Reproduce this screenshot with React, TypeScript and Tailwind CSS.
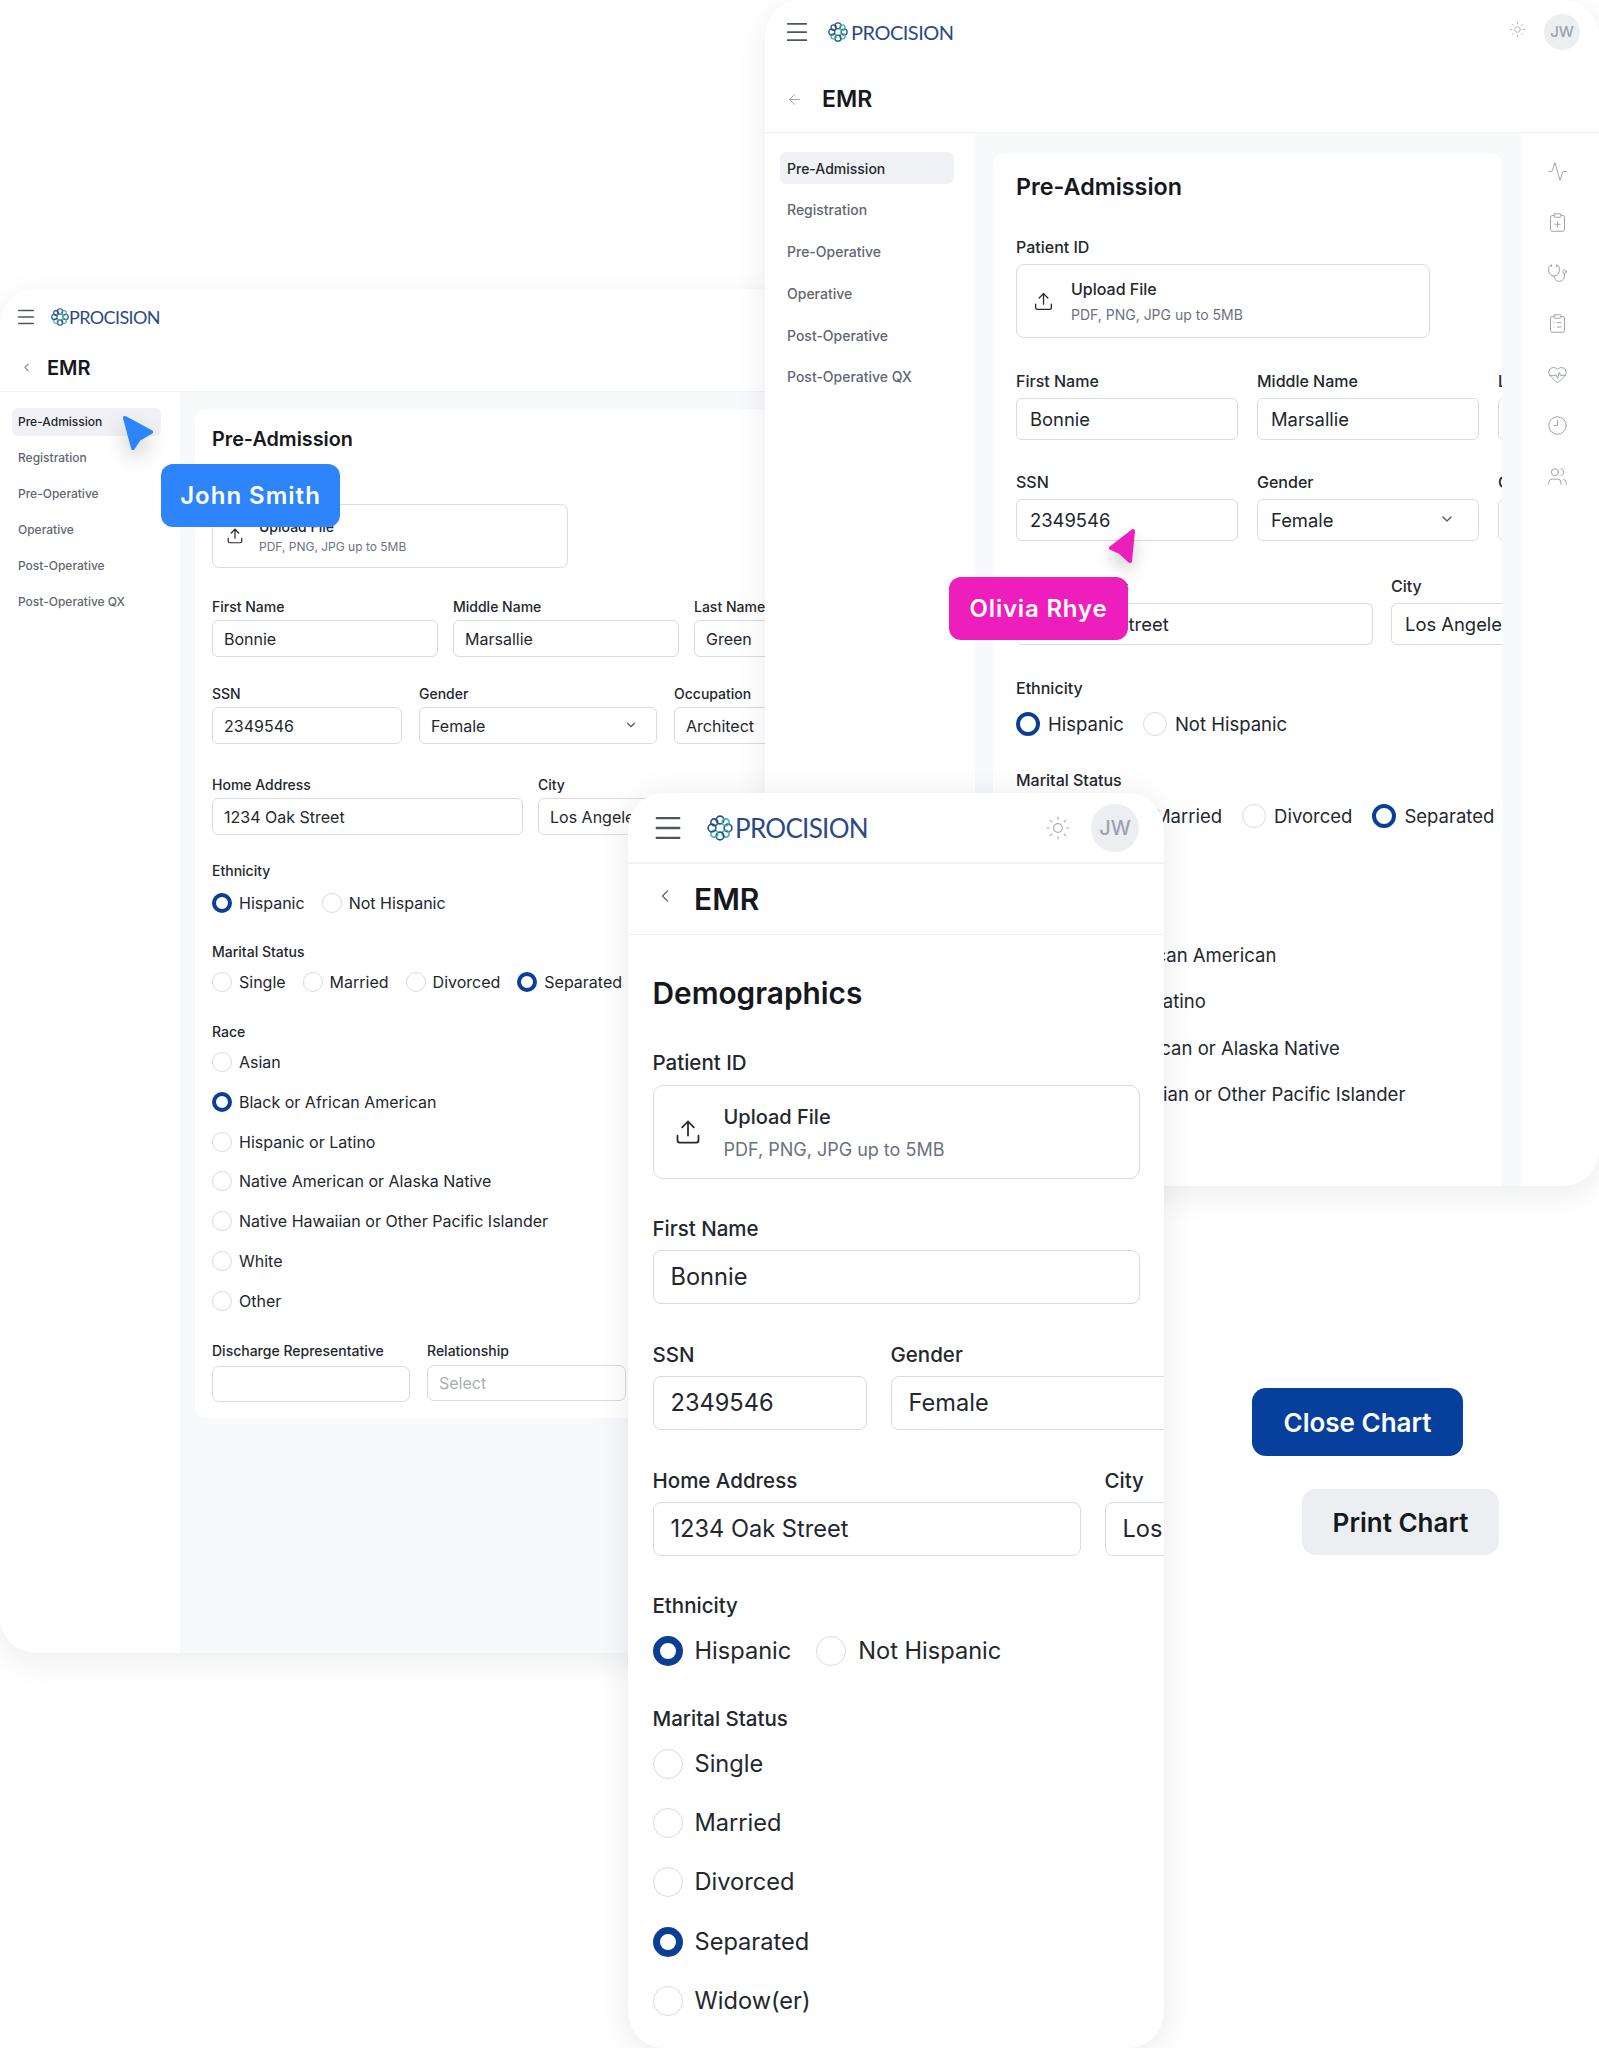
import React from "react";
import { Menu, Sun, ArrowLeft, ChevronLeft, ChevronDown, Upload, Activity, ClipboardPlus, Stethoscope, ClipboardList, HeartPulse, Clock9, Users } from "lucide-react";

const LOBES = [0, 45, 90, 135, 180, 225, 270, 315];

function Logo({ size, textClass, gapClass }: { size: number; textClass: string; gapClass: string }) {
  return (
    <div className={`flex items-center ${gapClass}`}>
      <svg width={size} height={size} viewBox="0 0 24 24" fill="none" strokeWidth="1.5">
        {LOBES.map((a, i) => (
          <circle
            key={a}
            cx={12 + 7.4 * Math.cos((a * Math.PI) / 180)}
            cy={12 + 7.4 * Math.sin((a * Math.PI) / 180)}
            r={i % 2 === 0 ? 3.6 : 3.2}
            stroke={a >= 180 && a < 315 ? "#2b4f8a" : i % 2 === 0 ? "#2b4f8a" : "#3bb3a6"}
          />
        ))}
      </svg>
      <span className={`font-[Lato,sans-serif] text-[#2b4a86] ${textClass}`}>PROCISION</span>
    </div>
  );
}

function Radio({ label, on, size, ring, text, gap }: { label: string; on?: boolean; size: string; ring: string; text: string; gap: string }) {
  return (
    <div className={`flex items-center whitespace-nowrap ${gap}`}>
      <span className={`shrink-0 rounded-full bg-white ${size} ${on ? `${ring} border-[#0b3f95]` : "border border-[#d9dbdf]"}`} />
      <span className={`text-[#23272e] ${text}`}>{label}</span>
    </div>
  );
}

const ETH = [["Hispanic", true], ["Not Hispanic", false]] as const;
const MAR = [["Single", false], ["Married", false], ["Divorced", false], ["Separated", true]] as const;
const RACE = ["Asian", "Black or African American", "Hispanic or Latino", "Native American or Alaska Native", "Native Hawaiian or Other Pacific Islander", "White", "Other"];
const NAV = ["Pre-Admission", "Registration", "Pre-Operative", "Operative", "Post-Operative", "Post-Operative QX"];

function InputA({ w, v, label, chevron }: { w: string; v: string; label: string; chevron?: boolean }) {
  return (
    <div className={`shrink-0 ${w}`}>
      <div className="h-[18px] text-[14px] leading-[18px] font-medium text-[#23272e]">{label}</div>
      <div className="mt-[4px] flex h-[37px] items-center justify-between rounded-[6px] border border-[#d8dbe0] bg-white pr-[18px] pl-[11px] text-[16px] text-[#23272e]">
        <span className="whitespace-nowrap">{v}</span>
        {chevron && <ChevronDown size={14} className="mt-[-2px] text-[#555b65]" />}
      </div>
    </div>
  );
}

function InputB({ w, v, label, chevron }: { w: string; v: string; label: string; chevron?: boolean }) {
  return (
    <div className={`shrink-0 ${w}`}>
      <div className="h-[20px] text-[16px] leading-[20px] font-medium text-[#23272e]">{label}</div>
      <div className="mt-[7px] flex h-[42px] items-center justify-between rounded-[6px] border border-[#d8dbe0] bg-white pt-[2px] pr-[23px] pl-[13px] text-[18.4px] text-[#23272e]">
        <span className="whitespace-nowrap">{v}</span>
        {chevron && <ChevronDown size={16} className="mt-[-4px] text-[#555b65]" />}
      </div>
    </div>
  );
}

function InputC({ w, v, label }: { w: string; v: string; label: string }) {
  return (
    <div className={`shrink-0 ${w}`}>
      <div className="h-[26px] text-[20.5px] leading-[26px] font-medium text-[#23272e]">{label}</div>
      <div className="mt-[8px] flex h-[54px] items-center rounded-[8px] border border-[#d8dbe0] bg-white pl-[17px] text-[23.6px] text-[#23272e]">
        <span className="whitespace-nowrap">{v}</span>
      </div>
    </div>
  );
}

function WindowA() {
  const r = { size: "h-[20px] w-[20px]", ring: "border-[4px]", text: "text-[16px] leading-[20px]", gap: "gap-[7px]" };
  return (
    <section className="absolute top-[289px] left-0 flex h-[1364px] w-[800px] flex-col overflow-hidden rounded-[36px] bg-white shadow-[0_8px_32px_rgba(16,24,40,0.08)]">
      <div className="flex h-[56px] shrink-0 items-center pl-[15px]">
        <Menu size={22} strokeWidth={1.6} className="text-[#4b5563]" />
        <div className="ml-[14px]"><Logo size={18} gapClass="gap-0" textClass="text-[18px] leading-none tracking-[-0.6px]" /></div>
      </div>
      <div className="flex h-[47px] shrink-0 items-center border-b border-[#f1f2f4] pl-[20px]">
        <ChevronLeft size={13} className="mt-[-2px] text-[#8b9098]" />
        <span className="ml-[14px] text-[20px] font-semibold text-[#15181d]">EMR</span>
      </div>
      <div className="flex min-h-0 flex-1">
        <nav className="flex w-[180px] shrink-0 flex-col gap-[8px] pt-[16px] pr-[19px] pl-[12px]">
          {NAV.map((n, i) => (
            <div key={n} className={`flex h-[28px] items-center rounded-[6px] px-[6px] text-[12px] font-medium whitespace-nowrap ${i === 0 ? "bg-[#f0f1f4] text-[#23272e]" : "text-[#5f6772]"}`}>{n}</div>
          ))}
        </nav>
        <main className="flex-1 overflow-hidden bg-[#f8f9fb] pt-[17px] pl-[15px]">
          <div className="h-[1009px] w-[700px] overflow-hidden rounded-[10px] bg-white pt-[17px] pl-[17px]">
            <h2 className="h-[26px] text-[19.8px] leading-[26px] font-semibold text-[#15181d]">Pre-Admission</h2>
            <div className="mt-[26px] h-[18px] text-[14px] leading-[18px] font-medium text-[#23272e]">Patient ID</div>
            <div className="mt-[8px] flex h-[64px] w-[356px] items-center gap-[15px] rounded-[7px] border border-[#d8dbe0] pl-[13px]">
              <Upload size={18} strokeWidth={1.6} className="text-[#23272e]" />
              <div>
                <div className="text-[14px] leading-[19px] font-medium text-[#23272e]">Upload File</div>
                <div className="mt-[3px] text-[12px] leading-[16px] text-[#6b7280]">PDF, PNG, JPG up to 5MB</div>
              </div>
            </div>
            <div className="mt-[30px] flex gap-[15px]">
              <InputA w="w-[226px]" label="First Name" v="Bonnie" />
              <InputA w="w-[226px]" label="Middle Name" v="Marsallie" />
              <InputA w="w-[226px]" label="Last Name" v="Green" />
            </div>
            <div className="mt-[28px] flex gap-[17px]">
              <InputA w="w-[190px]" label="SSN" v="2349546" />
              <InputA w="w-[238px]" label="Gender" v="Female" chevron />
              <InputA w="w-[226px]" label="Occupation" v="Architect" />
            </div>
            <div className="mt-[32px] flex gap-[15px]">
              <InputA w="w-[311px]" label="Home Address" v="1234 Oak Street" />
              <InputA w="w-[226px]" label="City" v="Los Angeles" />
            </div>
            <div className="mt-[27px] h-[18px] text-[14px] leading-[18px] font-medium text-[#23272e]">Ethnicity</div>
            <div className="mt-[13px] flex gap-[17px]">
              {ETH.map(([l, o]) => <Radio key={l} label={l} on={o} {...r} />)}
            </div>
            <div className="mt-[30px] h-[18px] text-[14px] leading-[18px] font-medium text-[#23272e]">Marital Status</div>
            <div className="mt-[11px] flex gap-[17px]">
              {MAR.map(([l, o]) => <Radio key={l} label={l} on={o} {...r} />)}
            </div>
            <div className="mt-[31px] h-[18px] text-[14px] leading-[18px] font-medium text-[#23272e]">Race</div>
            <div className="mt-[11px] flex flex-col gap-[19.8px]">
              {RACE.map((l, i) => <Radio key={l} label={l} on={i === 1} {...r} />)}
            </div>
            <div className="mt-[31px] flex gap-[17px]">
              <div className="w-[198px] shrink-0">
                <div className="h-[18px] text-[14px] leading-[18px] font-medium text-[#23272e]">Discharge Representative</div>
                <div className="mt-[6px] h-[36px] rounded-[7px] border border-[#d8dbe0]" />
              </div>
              <div className="w-[199px] shrink-0">
                <div className="h-[18px] text-[14px] leading-[18px] font-medium text-[#23272e]">Relationship</div>
                <div className="mt-[5px] flex h-[36px] items-center rounded-[7px] border border-[#d8dbe0] pl-[11px] text-[16px] text-[#a9aeb6]">Select</div>
              </div>
            </div>
          </div>
        </main>
      </div>
    </section>
  );
}

function WindowB() {
  const r = { size: "h-[24px] w-[24px]", ring: "border-[4.5px]", text: "text-[18.5px] leading-[24px]", gap: "gap-[8px]" };
  const label = "h-[20px] text-[16px] leading-[20px] font-medium text-[#23272e]";
  const rail = [Activity, ClipboardPlus, Stethoscope, ClipboardList, HeartPulse, Clock9, Users];
  return (
    <section className="absolute top-0 left-[765px] flex h-[1186px] w-[834px] flex-col overflow-hidden rounded-[36px] bg-white shadow-[0_8px_32px_rgba(16,24,40,0.08)]">
      <div className="flex h-[65px] shrink-0 items-center pr-[19px] pb-[1px] pl-[18px]">
        <Menu size={28} strokeWidth={1.5} className="text-[#4b5563]" />
        <div className="ml-[17px]"><Logo size={20} gapClass="gap-[3px]" textClass="text-[20px] leading-none tracking-[-0.5px]" /></div>
        <Sun size={17} strokeWidth={1.2} className="mt-[-6px] ml-auto text-[#a6abb3]" />
        <div className="ml-[18px] flex h-[36px] w-[36px] items-center justify-center rounded-full bg-[#eceef2] text-[15px] font-medium text-[#9ca3af]">JW</div>
      </div>
      <div className="flex h-[68px] shrink-0 items-center border-b border-[#eef0f2] pt-[2px] pl-[21px]">
        <ArrowLeft size={17} strokeWidth={1.3} className="text-[#9aa0a8]" />
        <span className="ml-[19px] text-[23px] font-semibold text-[#15181d]">EMR</span>
      </div>
      <div className="flex min-h-0 flex-1">
        <nav className="flex w-[210px] shrink-0 flex-col gap-[9.8px] pt-[19px] pr-[21px] pl-[15px]">
          {NAV.map((n, i) => (
            <div key={n} className={`flex h-[32px] items-center rounded-[6px] px-[7px] text-[14px] font-medium whitespace-nowrap ${i === 0 ? "bg-[#f0f1f4] text-[#23272e]" : "text-[#5f6772]"}`}>{n}</div>
          ))}
        </nav>
        <main className="w-[546px] shrink-0 overflow-hidden bg-[#f8f9fb] pt-[20px] pl-[18px]">
          <div className="h-[1040px] w-[509px] overflow-hidden rounded-t-[12px] bg-white pt-[20px] pl-[23px]">
            <h2 className="h-[28px] text-[23.3px] leading-[28px] font-semibold text-[#15181d]">Pre-Admission</h2>
            <div className={`mt-[36px] ${label}`}>Patient ID</div>
            <div className="mt-[7px] flex h-[74px] w-[414px] items-center gap-[17px] rounded-[8px] border border-[#d8dbe0] pl-[16px]">
              <Upload size={21} strokeWidth={1.5} className="text-[#23272e]" />
              <div>
                <div className="text-[16px] leading-[22px] font-medium text-[#23272e]">Upload File</div>
                <div className="mt-[6px] text-[14px] leading-[18px] text-[#6b7280]">PDF, PNG, JPG up to 5MB</div>
              </div>
            </div>
            <div className="mt-[33px] flex gap-[19px]">
              <InputB w="w-[222px]" label="First Name" v="Bonnie" />
              <InputB w="w-[222px]" label="Middle Name" v="Marsallie" />
              <InputB w="w-[222px]" label="Last Name" v="Green" />
            </div>
            <div className="mt-[32px] flex gap-[19px]">
              <InputB w="w-[222px]" label="SSN" v="2349546" />
              <InputB w="w-[222px]" label="Gender" v="Female" chevron />
              <InputB w="w-[222px]" label="Occupation" v="Architect" />
            </div>
            <div className="mt-[35px] flex gap-[18px]">
              <InputB w="w-[357px]" label="Home Address" v="1234 Oak Street" />
              <InputB w="w-[222px]" label="City" v="Los Angeles" />
            </div>
            <div className={`mt-[33px] ${label}`}>Ethnicity</div>
            <div className="mt-[14px] flex gap-[19px]">
              {ETH.map(([l, o]) => <Radio key={l} label={l} on={o} {...r} />)}
            </div>
            <div className={`mt-[34px] ${label}`}>Marital Status</div>
            <div className="mt-[14px] flex gap-[20px]">
              {MAR.map(([l, o]) => <Radio key={l} label={l} on={o} {...r} />)}
            </div>
            <div className={`mt-[35px] ${label}`}>Race</div>
            <div className="mt-[13px] flex flex-col gap-[22.6px]">
              {RACE.map((l, i) => <Radio key={l} label={l} on={i === 1} {...r} />)}
            </div>
          </div>
        </main>
        <aside className="flex flex-1 flex-col items-center gap-[29.8px] pt-[28px] pr-[5px]">
          {rail.map((I, i) => <I key={i} size={21} strokeWidth={1.1} className="text-[#9aa0a8]" />)}
        </aside>
      </div>
    </section>
  );
}

function WindowC() {
  const r = { size: "h-[30px] w-[30px]", ring: "border-[7px]", text: "text-[23.6px] leading-[30px]", gap: "gap-[12px]" };
  const label = "h-[26px] text-[20.5px] leading-[26px] font-medium text-[#23272e]";
  return (
    <section className="absolute top-[793px] left-[628px] flex h-[1255px] w-[536px] flex-col overflow-hidden rounded-[36px] bg-white shadow-[0_4px_36px_rgba(16,24,40,0.09)]">
      <div className="flex h-[71px] shrink-0 items-center border-b-2 border-[#f2f3f5] pr-[25px] pl-[23px]">
        <Menu size={34} strokeWidth={1.6} className="text-[#4b5563]" />
        <div className="ml-[22px]"><Logo size={26} gapClass="gap-[2px]" textClass="text-[26px] leading-none tracking-[-0.7px]" /></div>
        <Sun size={26} strokeWidth={1.1} className="mr-[1px] ml-auto text-[#a6abb3]" />
        <div className="ml-[19px] flex h-[48px] w-[48px] items-center justify-center rounded-full bg-[#eceef2] text-[20px] font-medium text-[#9ca3af]">JW</div>
      </div>
      <div className="flex h-[71px] shrink-0 items-center border-b border-[#eceef0] pl-[27px]">
        <ChevronLeft size={20} strokeWidth={1.3} className="mt-[-6px] text-[#555b65]" />
        <span className="ml-[19px] text-[30px] font-semibold text-[#15181d]">EMR</span>
      </div>
      <div className="pr-[25px] pl-[24.5px]">
        <h2 className="mt-[40px] h-[36px] text-[29.8px] leading-[36px] font-semibold text-[#15181d]">Demographics</h2>
        <div className={`mt-[39px] ${label}`}>Patient ID</div>
        <div className="mt-[9px] flex h-[94px] w-[487px] items-center gap-[22px] rounded-[10px] border border-[#d8dbe0] pl-[20px]">
          <Upload size={28} strokeWidth={1.5} className="text-[#23272e]" />
          <div>
            <div className="text-[20px] leading-[28px] font-medium text-[#23272e]">Upload File</div>
            <div className="mt-[7px] text-[18px] leading-[24px] text-[#6b7280]">PDF, PNG, JPG up to 5MB</div>
          </div>
        </div>
        <div className="mt-[37px]"><InputC w="w-[487px]" label="First Name" v="Bonnie" /></div>
        <div className="mt-[38px] flex w-[700px] gap-[24px]">
          <InputC w="w-[214px]" label="SSN" v="2349546" />
          <InputC w="w-[400px]" label="Gender" v="Female" />
        </div>
        <div className="mt-[38px] flex w-[700px] gap-[24px]">
          <InputC w="w-[428px]" label="Home Address" v="1234 Oak Street" />
          <InputC w="w-[200px]" label="City" v="Los Angeles" />
        </div>
        <div className={`mt-[37px] ${label}`}>Ethnicity</div>
        <div className="mt-[17px] flex gap-[25px]">
          {ETH.map(([l, o]) => <Radio key={l} label={l} on={o} {...r} />)}
        </div>
        <div className={`mt-[40px] ${label}`}>Marital Status</div>
        <div className="mt-[17px] flex flex-col gap-[29.2px]">
          {[...MAR, ["Widow(er)", false] as const].map(([l, o]) => <Radio key={l} label={l} on={o} {...r} />)}
        </div>
      </div>
    </section>
  );
}

export default function App() {
  return (
    <div className="relative h-[2048px] w-[1599px] overflow-hidden bg-white font-[Inter,sans-serif]">
      <WindowA />
      <WindowB />
      <svg className="absolute top-[410px] left-[118px] drop-shadow-[0_10px_10px_rgba(0,0,0,0.2)]" width="40" height="44" viewBox="0 0 40 44">
        <polygon points="7,8 33,22 21,29 15,38" fill="#2e85fb" stroke="#2e85fb" strokeWidth="4" strokeLinejoin="round" />
      </svg>
      <div className="absolute top-[464px] left-[161px] flex h-[63px] w-[179px] items-center justify-center rounded-[12px] bg-[#2e85fb] text-[24px] font-semibold tracking-[1px] text-white">John Smith</div>
      <svg className="absolute top-[522px] left-[1100px] drop-shadow-[0_8px_8px_rgba(0,0,0,0.2)]" width="42" height="46" viewBox="0 0 42 46">
        <polygon points="33,9 11,26 20,30 30,39" fill="#ee1ebd" stroke="#ee1ebd" strokeWidth="4" strokeLinejoin="round" />
      </svg>
      <div className="absolute top-[577px] left-[949px] flex h-[63px] w-[179px] items-center justify-center rounded-[12px] bg-[#ee1ebd] text-[24px] font-semibold tracking-[0.8px] text-white">Olivia Rhye</div>
      <WindowC />
      <button className="absolute top-[1388px] left-[1252px] flex h-[68px] w-[211px] items-center justify-center rounded-[14px] bg-[#073f9c] text-[26px] font-semibold text-white">Close Chart</button>
      <button className="absolute top-[1489px] left-[1302px] flex h-[66px] w-[197px] items-center justify-center rounded-[14px] bg-[#eceef2] text-[26px] font-semibold text-[#15181d]">Print Chart</button>
    </div>
  );
}
